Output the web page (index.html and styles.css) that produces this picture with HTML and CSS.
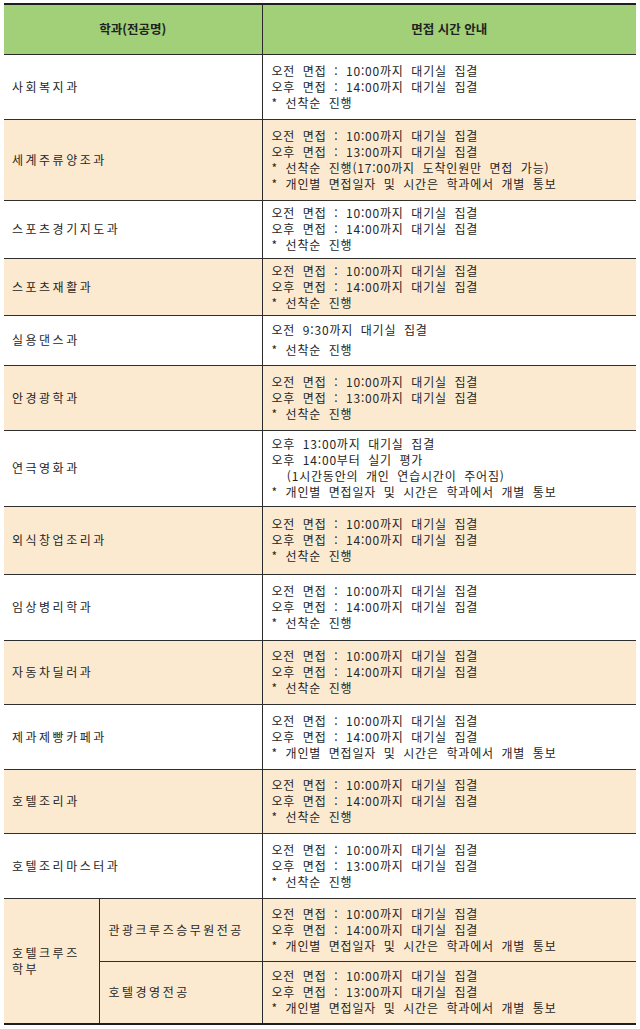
FILE: index.html
```html
<!DOCTYPE html>
<html lang="ko">
<head>
<meta charset="utf-8">
<link rel="stylesheet" href="styles.css">
</head>
<body>
<div class="wrap">
<table class="sched">
  <colgroup><col class="c1"><col class="c2"><col class="c3"></colgroup>
  <thead>
    <tr class="h-head"><th colspan="2">학과(전공명)</th><th>면접 시간 안내</th></tr>
  </thead>
  <tbody>
    <tr class="h65"><td colspan="2" class="dept">사회복지과</td><td class="info">오전 면접 : 10:00까지 대기실 집결<br>오후 면접 : 14:00까지 대기실 집결<br>* 선착순 진행</td></tr>
    <tr class="h81 alt"><td colspan="2" class="dept">세계주류양조과</td><td class="info">오전 면접 : 10:00까지 대기실 집결<br>오후 면접 : 13:00까지 대기실 집결<br>* 선착순 진행(17:00까지 도착인원만 면접 가능)<br>* 개인별 면접일자 및 시간은 학과에서 개별 통보</td></tr>
    <tr class="h58"><td colspan="2" class="dept">스포츠경기지도과</td><td class="info">오전 면접 : 10:00까지 대기실 집결<br>오후 면접 : 14:00까지 대기실 집결<br>* 선착순 진행</td></tr>
    <tr class="h57 alt"><td colspan="2" class="dept">스포츠재활과</td><td class="info">오전 면접 : 10:00까지 대기실 집결<br>오후 면접 : 14:00까지 대기실 집결<br>* 선착순 진행</td></tr>
    <tr class="h50"><td colspan="2" class="dept">실용댄스과</td><td class="info loose">오전 9:30까지 대기실 집결<br>* 선착순 진행</td></tr>
    <tr class="h65 alt"><td colspan="2" class="dept">안경광학과</td><td class="info">오전 면접 : 10:00까지 대기실 집결<br>오후 면접 : 13:00까지 대기실 집결<br>* 선착순 진행</td></tr>
    <tr class="h76"><td colspan="2" class="dept">연극영화과</td><td class="info">오후 13:00까지 대기실 집결<br>오후 14:00부터 실기 평가<br>&nbsp;&nbsp;(1시간동안의 개인 연습시간이 주어짐)<br>* 개인별 면접일자 및 시간은 학과에서 개별 통보</td></tr>
    <tr class="h68 alt"><td colspan="2" class="dept">외식창업조리과</td><td class="info">오전 면접 : 10:00까지 대기실 집결<br>오후 면접 : 14:00까지 대기실 집결<br>* 선착순 진행</td></tr>
    <tr class="h66"><td colspan="2" class="dept">임상병리학과</td><td class="info">오전 면접 : 10:00까지 대기실 집결<br>오후 면접 : 14:00까지 대기실 집결<br>* 선착순 진행</td></tr>
    <tr class="h64 alt"><td colspan="2" class="dept">자동차딜러과</td><td class="info">오전 면접 : 10:00까지 대기실 집결<br>오후 면접 : 14:00까지 대기실 집결<br>* 선착순 진행</td></tr>
    <tr class="h65"><td colspan="2" class="dept">제과제빵카페과</td><td class="info">오전 면접 : 10:00까지 대기실 집결<br>오후 면접 : 14:00까지 대기실 집결<br>* 개인별 면접일자 및 시간은 학과에서 개별 통보</td></tr>
    <tr class="h64 alt"><td colspan="2" class="dept">호텔조리과</td><td class="info">오전 면접 : 10:00까지 대기실 집결<br>오후 면접 : 14:00까지 대기실 집결<br>* 선착순 진행</td></tr>
    <tr class="h65"><td colspan="2" class="dept">호텔조리마스터과</td><td class="info">오전 면접 : 10:00까지 대기실 집결<br>오후 면접 : 13:00까지 대기실 집결<br>* 선착순 진행</td></tr>
    <tr class="h63 alt"><td rowspan="2" class="dept group">호텔크루즈<br>학부</td><td class="dept sub">관광크루즈승무원전공</td><td class="info">오전 면접 : 10:00까지 대기실 집결<br>오후 면접 : 14:00까지 대기실 집결<br>* 개인별 면접일자 및 시간은 학과에서 개별 통보</td></tr>
    <tr class="h63 alt"><td class="dept sub">호텔경영전공</td><td class="info">오전 면접 : 10:00까지 대기실 집결<br>오후 면접 : 13:00까지 대기실 집결<br>* 개인별 면접일자 및 시간은 학과에서 개별 통보</td></tr>
  </tbody>
</table>
</div>
</body>
</html>
```
FILE: styles.css
```css
html, body {
  margin: 0;
  padding: 0;
  background: #ffffff;
}
.wrap {
  padding: 3px 4px 0 4px;
}
.sched {
  width: 632px;
  border-collapse: collapse;
  table-layout: fixed;
  font-family: "Noto Sans CJK KR", "Noto Sans", sans-serif;
  font-size: 12px;
  color: #262626;
  line-height: 16px;
}
.c1 { width: 95px; }
.c2 { width: 163px; }
.c3 { width: 374px; }
.sched th {
  background: #a2d078;
  font-weight: bold;
  font-size: 12.5px;
  text-align: center;
  vertical-align: middle;
  border-top: 2px solid #1e1e1e;
  border-bottom: 1px solid #2a2a2a;
  color: #222;
}
.sched th + th { border-left: 1px solid #2a2a2a; }
.sched td {
  border-bottom: 1px solid #2f2f2f;
  vertical-align: middle;
  padding: 0;
}
.sched tbody tr:last-child td,
.sched td.group { border-bottom: 2px solid #1e1e1e; }
.sched td.info {
  border-left: 1px solid #2a2a2a;
  padding-left: 9px;
  letter-spacing: 0.8px;
  word-spacing: 3.5px;
}
.sched td.info.loose { line-height: 20px; }
.sched td.dept {
  padding-left: 8px;
  letter-spacing: 2.5px;
}
.sched td.dept.sub {
  padding-left: 9px;
  border-left: 1px solid #2a2a2a;
}
.alt td { background: #fcead0; }
.h-head { height: 50px; }
.h50 { height: 50px; }
.h57 { height: 57px; }
.h58 { height: 58px; }
.h63 { height: 63px; }
.h64 { height: 64px; }
.h65 { height: 65px; }
.h66 { height: 66px; }
.h68 { height: 68px; }
.h76 { height: 76px; }
.h81 { height: 81px; }
```
